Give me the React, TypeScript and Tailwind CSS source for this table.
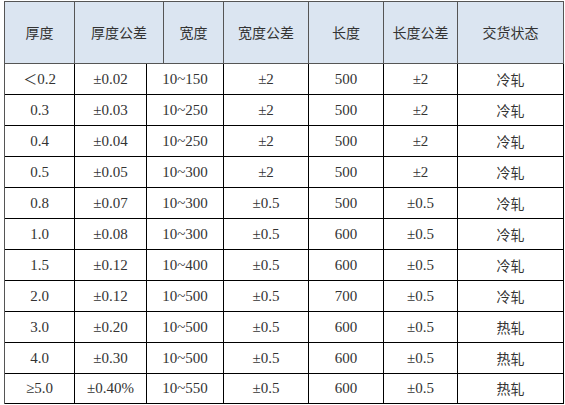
const headers = ['厚度', '厚度公差', '宽度', '宽度公差', '长度', '长度公差', '交货状态'];

const rows: string[][] = [
  ['<0.2', '±0.02', '10~150', '±2', '500', '±2', '冷轧'],
  ['0.3', '±0.03', '10~250', '±2', '500', '±2', '冷轧'],
  ['0.4', '±0.04', '10~250', '±2', '500', '±2', '冷轧'],
  ['0.5', '±0.05', '10~300', '±2', '500', '±2', '冷轧'],
  ['0.8', '±0.07', '10~300', '±0.5', '500', '±0.5', '冷轧'],
  ['1.0', '±0.08', '10~300', '±0.5', '600', '±0.5', '冷轧'],
  ['1.5', '±0.12', '10~400', '±0.5', '600', '±0.5', '冷轧'],
  ['2.0', '±0.12', '10~500', '±0.5', '700', '±0.5', '冷轧'],
  ['3.0', '±0.20', '10~500', '±0.5', '600', '±0.5', '热轧'],
  ['4.0', '±0.30', '10~500', '±0.5', '600', '±0.5', '热轧'],
  ['≥5.0', '±0.40%', '10~550', '±0.5', '600', '±0.5', '热轧'],
];

export default function App() {
  return (
    <div className="w-[565px] h-[405px] bg-white pl-[4px] pt-[1px]">
      <div className="w-[560px] border-l border-t border-[#555]">
        {/* header */}
        <div className="grid grid-cols-[70px_89px_60px_85px_75px_74px_106px] h-[62px] bg-[#dbe5f1] border-b border-[#555]">
          {headers.map((h, i) => (
            <div
              key={i}
              className="flex items-center justify-center border-r border-[#555] text-[14px] text-[#333] font-['Noto_Sans_CJK_SC',sans-serif]"
            >
              {h}
            </div>
          ))}
        </div>

        {/* body */}
        {rows.map((r, ri) => (
          <div
            key={ri}
            className={`grid grid-cols-[70px_72px_77px_85px_75px_74px_106px] border-b border-black ${
              ri === rows.length - 1 ? 'h-[30px]' : 'h-[31px]'
            }`}
          >
            {r.map((c, ci) =>
              ci === 6 ? (
                <div
                  key={ci}
                  className="flex items-center justify-center border-r border-black text-[14px] text-[#333] font-['Noto_Sans_CJK_SC',sans-serif]"
                >
                  {c}
                </div>
              ) : (
                <div
                  key={ci}
                  className="flex items-center justify-center border-r border-black text-[15px] text-[#333] font-['Liberation_Serif','Noto_Sans_CJK_SC',serif]"
                >
                  {c === '<0.2' ? (
                    <span>
                      <span className="font-['Noto_Sans_CJK_SC',sans-serif] text-[14px]">＜</span>0.2
                    </span>
                  ) : (
                    c
                  )}
                </div>
              )
            )}
          </div>
        ))}
      </div>
    </div>
  );
}
